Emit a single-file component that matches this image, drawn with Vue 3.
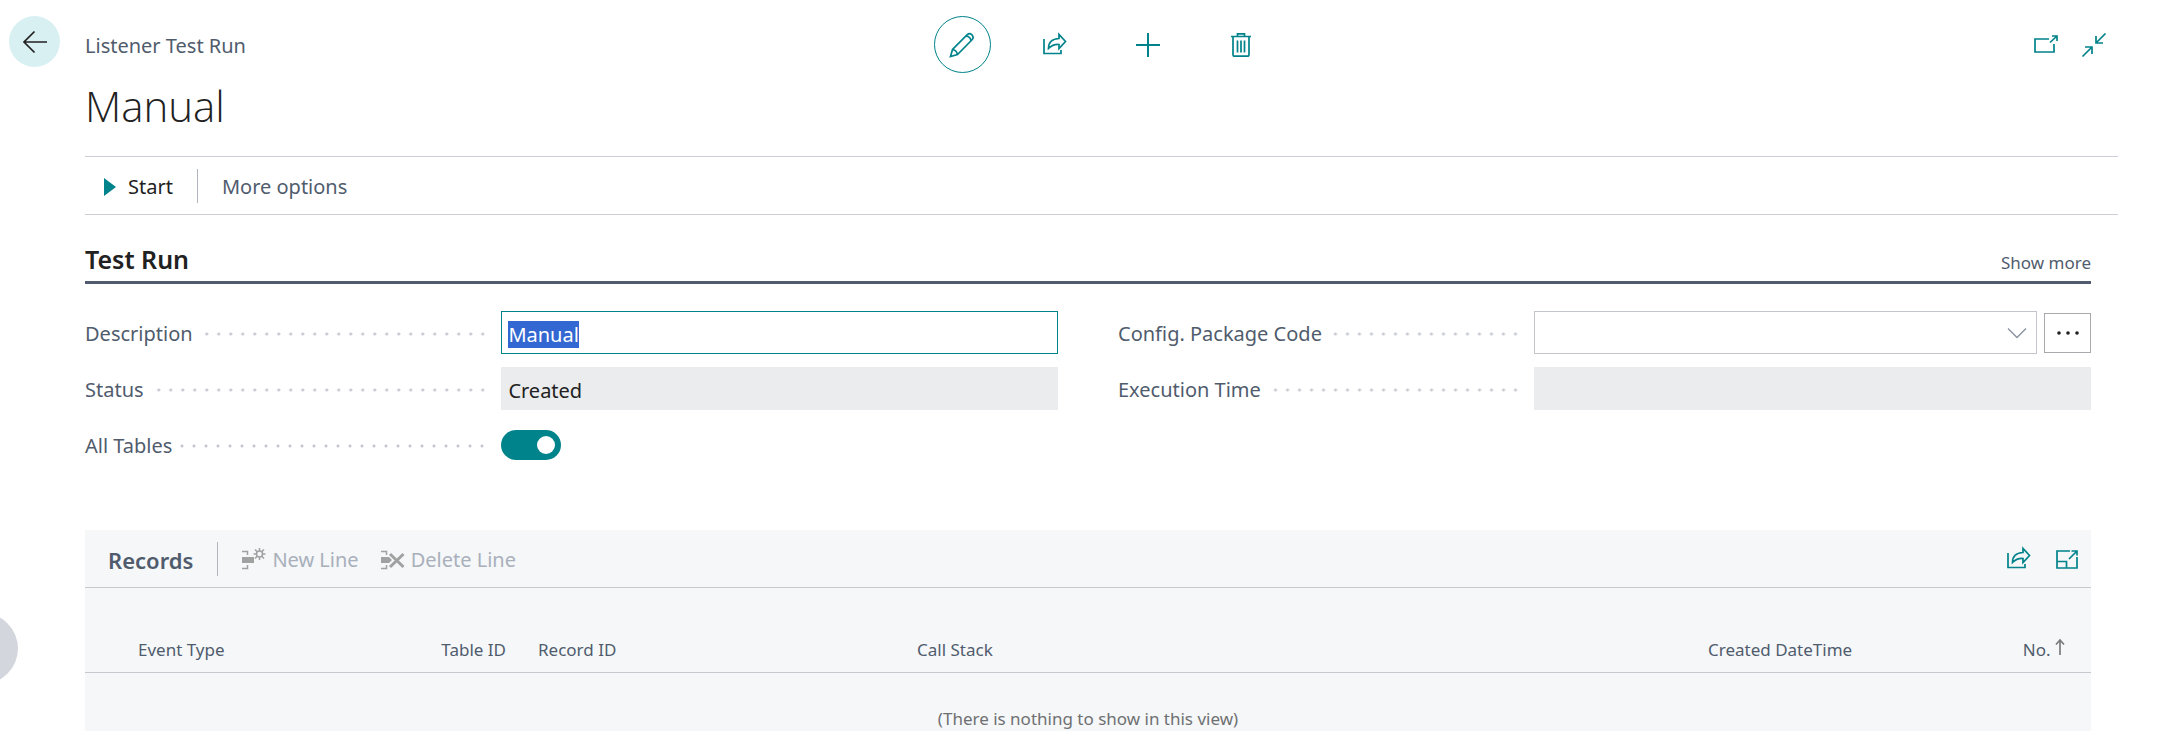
<script setup>
import { onMounted, ref } from 'vue'

const description = ref('Manual')
const status = ref('Created')
const packageCode = ref('')
const executionTime = ref('')
const allTables = ref(true)
const descriptionInput = ref(null)

onMounted(() => {
  descriptionInput.value.focus()
  descriptionInput.value.select()
})
</script>

<template>
  <div class="page">
    <button class="back" aria-label="Back">
      <svg width="26" height="26" viewBox="0 0 26 26"><path d="M25 13H2M12.500 2.500L2 13l10.500 10.500" /></svg>
    </button>
    <button class="handle" aria-label="Open side pane"></button>

    <main class="content">
      <header class="top">
        <span class="caption">Listener Test Run</span>
        <div class="actions">
          <button class="icon ringed" aria-label="Edit">
            <svg width="26" height="26" viewBox="0 0 26 26"><path d="M1.500 24.500L3.500 17.500 18.500 2.500Q20.500 .8 23 2.800 25 5.500 23.300 7.500L8.500 22.500ZM3.500 17.500Q7.500 18 8.500 22.500M17 4Q21.500 4.500 22 9" /></svg>
          </button>
          <button class="icon" aria-label="Share">
            <svg width="26" height="26" viewBox="0 0 26 26"><path d="M2 7V21.500H19V18M17 2.500V6.500Q6.500 7 6.500 16.500 11 12 17 12.500V16.500L23.500 9.500Z" /></svg>
          </button>
          <button class="icon" aria-label="New">
            <svg width="26" height="26" viewBox="0 0 26 26"><path class="even" d="M13 1v24M1 13h24" /></svg>
          </button>
          <button class="icon" aria-label="Delete">
            <svg width="26" height="26" viewBox="0 0 26 26"><path d="M3 4.500H23M9.500 4.500V1.800H16.500V4.500M5 4.500V22.500Q5 24.200 6.700 24.200H19.300Q21 24.200 21 22.500V4.500M9.500 8.500V20.500M13 8.500V20.500M16.500 8.500V20.500" /></svg>
          </button>
        </div>
        <div class="window">
          <button class="icon" aria-label="Open in new window">
            <svg width="26" height="26" viewBox="0 0 26 26"><path d="M16 7H2V20H21V12M17 10.500L24 4M19 4H24V9" /></svg>
          </button>
          <button class="icon" aria-label="Collapse">
            <svg width="26" height="26" viewBox="0 0 26 26"><path d="M1.500 24.500L11 15M4 15H11V22M24.500 1.500L15 11M15 4V11H22" /></svg>
          </button>
        </div>
      </header>

      <h1>{{ description }}</h1>

      <nav class="toolbar">
        <button class="start">
          <svg width="12" height="18" viewBox="0 0 12 18"><path d="M0 0L12 9L0 18Z" /></svg>
          Start
        </button>
        <span class="divider"></span>
        <button class="more">More options</button>
      </nav>

      <div class="sheet">
        <section>
          <div class="section-head">
            <h2>Test Run</h2>
            <a href="#">Show more</a>
          </div>
          <form class="fields" @submit.prevent>
            <div class="column">
              <div class="row">
                <label for="description">Description</label>
                <input id="description" ref="descriptionInput" v-model="description" class="box editing" type="text" autocomplete="off" spellcheck="false" />
              </div>
              <div class="row">
                <label for="status">Status</label>
                <input id="status" v-model="status" class="box readonly" type="text" readonly />
              </div>
              <div class="row">
                <label for="all-tables">All Tables</label>
                <input id="all-tables" v-model="allTables" class="switch" type="checkbox" role="switch" />
              </div>
            </div>
            <div class="column">
              <div class="row">
                <label for="package">Config. Package Code</label>
                <div class="lookup">
                  <select id="package" v-model="packageCode" class="box">
                    <option value=""></option>
                  </select>
                  <svg class="chevron" width="20" height="12" viewBox="0 0 20 12"><path d="M1 1.500L10 10.500L19 1.500" /></svg>
                  <button class="assist" type="button" aria-label="Choose a package">
                    <svg width="24" height="4" viewBox="0 0 24 4"><circle cx="3" cy="2" r="1.800" /><circle cx="12" cy="2" r="1.800" /><circle cx="21" cy="2" r="1.800" /></svg>
                  </button>
                </div>
              </div>
              <div class="row">
                <label for="execution">Execution Time</label>
                <input id="execution" v-model="executionTime" class="box readonly" type="text" readonly />
              </div>
            </div>
          </form>
        </section>

        <section class="records">
          <div class="records-bar">
            <h3>Records</h3>
            <span class="divider"></span>
            <button class="line-action" disabled>
              <svg width="24" height="24" viewBox="0 0 24 24">
                <path class="solid" d="M0 9H12V15H0Z" />
                <path d="M0 3.500H5.500V7M0 20.500H5.500V17" />
                <circle cx="17.500" cy="6" r="3" />
                <path d="M17.500 0V3M17.500 9V12M11.500 6H14.500M20.500 6H23.500M13 1.500L15.500 4M19.500 8L22 10.500M22 1.500L19.500 4M15.500 8L13 10.500" />
              </svg>
              New Line
            </button>
            <button class="line-action" disabled>
              <svg width="24" height="24" viewBox="0 0 24 24">
                <path class="solid" d="M0 9H8L11 12L8 15H0Z" />
                <path d="M0 3.500H5.500V7M0 20.500H5.500V17" />
                <path class="thick" d="M9 6L22.500 19M22.500 6L9 19" />
              </svg>
              Delete Line
            </button>
            <div class="records-tools">
              <button class="icon" aria-label="Share records">
                <svg width="26" height="26" viewBox="0 0 26 26"><path d="M2 7V21.500H19V18M17 2.500V6.500Q6.500 7 6.500 16.500 11 12 17 12.500V16.500L23.500 9.500Z" /></svg>
              </button>
              <button class="icon" aria-label="Expand records">
                <svg width="26" height="26" viewBox="0 0 26 26"><path d="M16 5H3V22H23V11M3 15.500H12.500V22M15 13L23 5M17.500 5H23V9.500" /></svg>
              </button>
            </div>
          </div>
          <table>
            <colgroup>
              <col class="c-mark" /><col class="c-event" /><col class="c-table" /><col class="c-record" /><col /><col class="c-created" /><col class="c-no" />
            </colgroup>
            <thead>
              <tr>
                <td></td>
                <th scope="col">Event Type</th>
                <th scope="col" class="right">Table ID</th>
                <th scope="col">Record ID</th>
                <th scope="col">Call Stack</th>
                <th scope="col">Created DateTime</th>
                <th scope="col" class="right number" aria-sort="ascending">No.
                  <svg width="10" height="18" viewBox="0 0 10 18"><path d="M5 17V2M1 6.500L5 2L9 6.500" /></svg>
                </th>
              </tr>
            </thead>
            <tbody>
              <tr>
                <td class="empty" colspan="7">(There is nothing to show in this view)</td>
              </tr>
            </tbody>
          </table>
        </section>
      </div>
    </main>
  </div>
</template>

<style>
body {
  margin: 0;
  background: #fff;
}
</style>

<style scoped>
* {
  box-sizing: border-box;
}

.page {
  position: relative;
  display: flex;
  align-items: flex-start;
  min-height: 100vh;
  overflow: hidden;
  color: #505c6d;
  font-family: "Noto Sans", "Open Sans", sans-serif;
  font-size: 20px;
  line-height: 28px;
}

button {
  display: flex;
  align-items: center;
  justify-content: center;
  margin: 0;
  padding: 0;
  border: 0;
  background: none;
  color: inherit;
  font: inherit;
}

svg {
  display: block;
  flex: none;
  fill: none;
  stroke: #00838a;
  stroke-width: 1.700;
}

.even {
  stroke-width: 2;
}

h1, h2, h3 {
  margin: 0;
}

.back {
  flex: none;
  width: 51px;
  height: 51px;
  margin: 16px 25px 0 9px;
  border-radius: 50%;
  background: #d9f0f2;
}

.back svg {
  stroke: #212121;
}

.handle {
  position: absolute;
  top: 613px;
  left: -53px;
  width: 71px;
  height: 71px;
  border-radius: 50%;
  background: #d3d6dc;
}

.content {
  flex: 1;
  min-width: 0;
  padding-right: 50px;
}

.top {
  display: grid;
  grid-template-columns: 1fr auto 1fr;
  align-items: center;
  padding-top: 16px;
}

.caption {
  padding-top: 3px;
}

.actions,
.window {
  display: flex;
  align-items: center;
}

.actions {
  gap: 36px;
}

.window {
  justify-content: flex-end;
  gap: 22px;
  padding-right: 11px;
}

.icon {
  width: 26px;
  height: 26px;
}

.actions .icon {
  width: 57px;
  height: 57px;
}

.ringed {
  border: 1px solid #00838a;
  border-radius: 50%;
}

h1 {
  padding: 3px 0 20px;
  color: #212121;
  font-family: "Open Sans", "Noto Sans", sans-serif;
  font-size: 42px;
  font-weight: 300;
  line-height: 60px;
}

.toolbar {
  display: flex;
  align-items: center;
  height: 59px;
  border: 1px solid #cccfd6;
  border-width: 1px 0;
}

.start,
.more {
  padding-top: 2px;
}

.start {
  gap: 12px;
  margin-left: 19px;
  color: #212121;
}

.start svg {
  fill: #00838a;
  stroke: none;
}

.divider {
  width: 1px;
  height: 34px;
  background: #b0b5be;
}

.toolbar .divider {
  margin: 0 24px;
}

.sheet {
  margin-right: 27px;
}

.section-head {
  display: flex;
  align-items: baseline;
  justify-content: space-between;
  padding: 26px 0 4px;
  border-bottom: 3px solid #505c6d;
}

h2 {
  color: #212121;
  font-size: 25px;
  font-weight: 600;
  line-height: 36px;
}

.section-head a {
  color: #505c6d;
  font-size: 17px;
  text-decoration: none;
}

.fields {
  display: grid;
  grid-template-columns: 1fr 1fr;
  gap: 60px;
  padding: 27px 0 64px;
}

.column {
  display: flex;
  flex-direction: column;
  gap: 13px;
}

.row {
  display: grid;
  grid-template-columns: calc(43% - 2px) 1fr;
  align-items: center;
  min-height: 43px;
}

.row label {
  display: flex;
  align-items: center;
  gap: 8px;
  padding: 3px 13px 0 0;
}

.row label::after {
  flex: 1;
  height: 4px;
  background: radial-gradient(circle at 6px 2px, #c6cad0 1px, transparent 2px) right 0 / 12px 4px repeat-x;
  content: "";
}

.box {
  width: 100%;
  min-width: 0;
  height: 43px;
  padding: 3px 6px 0;
  border: 1px solid #c2c6cc;
  border-radius: 0;
  outline: 0;
  background: #fff;
  color: #212121;
  font: inherit;
  appearance: none;
}

.editing {
  border-color: #00838a;
}

.editing::selection {
  background: #3367d1;
  color: #fff;
}

.readonly {
  border-color: #ebecee;
  background: #ebecee;
}

.switch {
  display: flex;
  align-items: center;
  width: 60px;
  height: 30px;
  margin: 0;
  padding: 0 6px;
  border-radius: 15px;
  background: #8a919c;
  appearance: none;
}

.switch::before {
  width: 18px;
  height: 18px;
  border-radius: 50%;
  background: #fff;
  content: "";
}

.switch:checked {
  justify-content: flex-end;
  background: #00838a;
}

.lookup {
  display: flex;
  align-items: center;
}

.chevron {
  margin: 0 10px 0 -30px;
  stroke: #8a919c;
  stroke-width: 1.300;
  pointer-events: none;
}

.assist {
  flex: none;
  width: 47px;
  height: 40px;
  margin-left: 7px;
  border: 1px solid #a8aaad;
}

.assist svg {
  fill: #212121;
  stroke: none;
}

.records {
  background: #f5f7f9;
}

.records-bar {
  display: flex;
  align-items: center;
  height: 58px;
  padding: 0 11px 0 23px;
  border-bottom: 1px solid #c6c9cd;
}

h3 {
  padding-top: 2px;
  color: #505c6d;
  font-size: 22px;
  font-weight: 600;
}

.records .divider {
  margin: 0 24px;
}

.line-action {
  gap: 6px;
  margin-right: 22px;
  padding-top: 2px;
  color: #a9b0bb;
}

.line-action svg {
  stroke: #a0a2a2;
  stroke-width: 1.500;
}

.line-action .solid {
  fill: #a0a2a2;
  stroke: none;
}

.line-action .thick {
  stroke-width: 3;
}

.records-tools {
  display: flex;
  gap: 22px;
  margin-left: auto;
}

table {
  width: 100%;
  border-collapse: collapse;
  table-layout: fixed;
  font-size: 17px;
  line-height: 24px;
}

.c-mark {
  width: 37px;
}

.c-event {
  width: 300px;
}

.c-table {
  width: 100px;
}

.c-record {
  width: 379px;
}

.c-created {
  width: 298px;
}

.c-no {
  width: 101px;
}

th {
  padding: 50px 16px 10px;
  font-weight: 400;
  text-align: left;
  white-space: nowrap;
}

thead tr {
  border-bottom: 1px solid #c6c9cd;
}

.right {
  text-align: right;
}

.number {
  padding-right: 26px;
}

.number svg {
  display: inline-block;
  stroke: #7a7c7e;
}

.empty {
  padding: 34px 0 0;
  color: #6f7072;
  text-align: center;
}
</style>
